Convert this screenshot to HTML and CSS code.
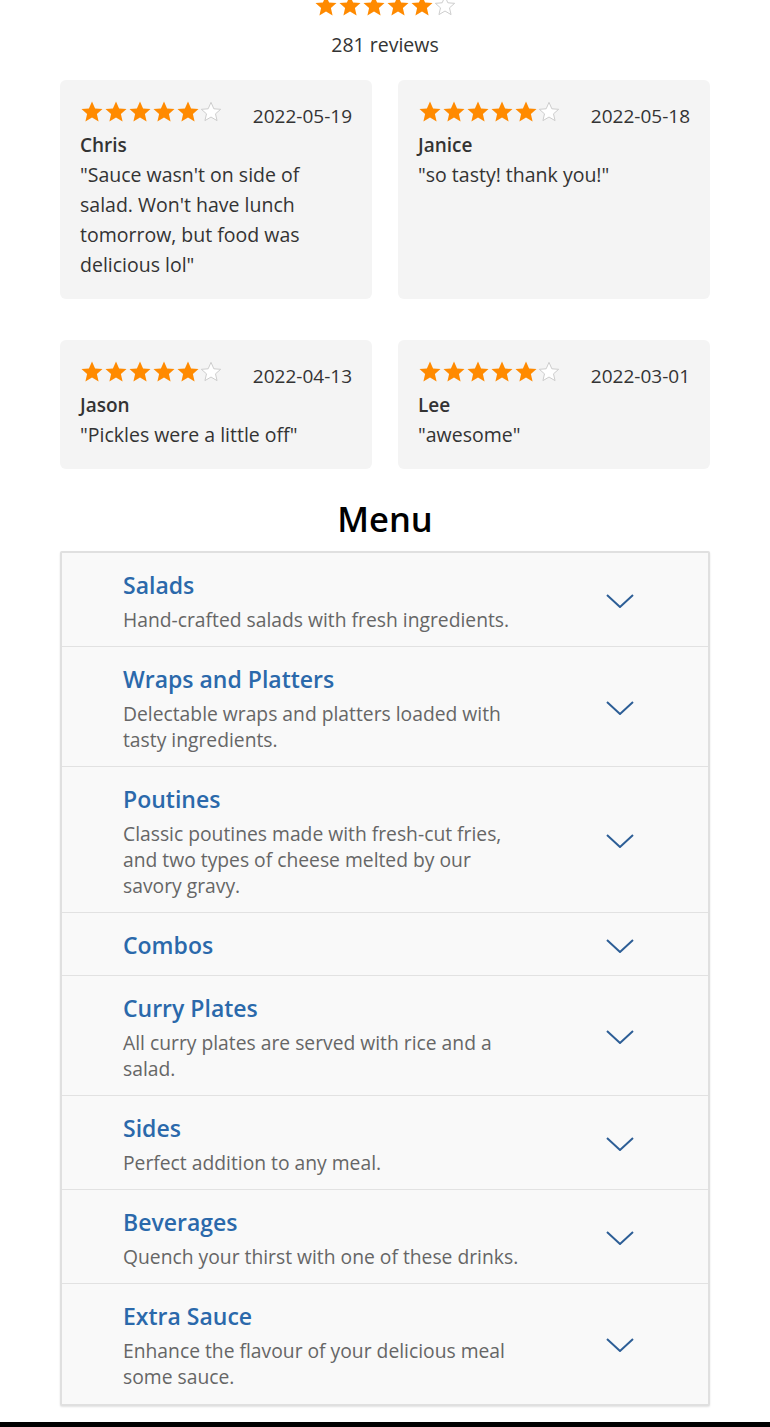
FILE: index.html
```html
<!DOCTYPE html>
<html>
<head>
<meta charset="utf-8">
<link rel="stylesheet" href="styles.css">
</head>
<body>
<svg width="0" height="0" class="defs">
  <defs>
    <symbol id="star" viewBox="0 0 24 24"><path d="M12 1.5l3.1 7 7.4.6-5.6 4.9 1.7 7.4L12 17.5l-6.6 3.9 1.7-7.4L1.5 9.1l7.4-.6z"/></symbol>
  </defs>
</svg>
<div class="page">
  <div class="summary">
    <div class="stars">
      <svg class="star full"><use href="#star"/></svg><svg class="star full"><use href="#star"/></svg><svg class="star full"><use href="#star"/></svg><svg class="star full"><use href="#star"/></svg><svg class="star full"><use href="#star"/></svg><svg class="star empty"><use href="#star"/></svg>
    </div>
    <div class="count">281 reviews</div>
  </div>

  <div class="reviews">
    <div class="card">
      <div class="card-top">
        <div class="stars"><svg class="star full"><use href="#star"/></svg><svg class="star full"><use href="#star"/></svg><svg class="star full"><use href="#star"/></svg><svg class="star full"><use href="#star"/></svg><svg class="star full"><use href="#star"/></svg><svg class="star empty"><use href="#star"/></svg></div>
        <span class="date">2022-05-19</span>
      </div>
      <div class="name">Chris</div>
      <div class="quote">"Sauce wasn't on side of salad. Won't have lunch tomorrow, but food was delicious lol"</div>
    </div>
    <div class="card">
      <div class="card-top">
        <div class="stars"><svg class="star full"><use href="#star"/></svg><svg class="star full"><use href="#star"/></svg><svg class="star full"><use href="#star"/></svg><svg class="star full"><use href="#star"/></svg><svg class="star full"><use href="#star"/></svg><svg class="star empty"><use href="#star"/></svg></div>
        <span class="date">2022-05-18</span>
      </div>
      <div class="name">Janice</div>
      <div class="quote">"so tasty! thank you!"</div>
    </div>
    <div class="card">
      <div class="card-top">
        <div class="stars"><svg class="star full"><use href="#star"/></svg><svg class="star full"><use href="#star"/></svg><svg class="star full"><use href="#star"/></svg><svg class="star full"><use href="#star"/></svg><svg class="star full"><use href="#star"/></svg><svg class="star empty"><use href="#star"/></svg></div>
        <span class="date">2022-04-13</span>
      </div>
      <div class="name">Jason</div>
      <div class="quote">"Pickles were a little off"</div>
    </div>
    <div class="card">
      <div class="card-top">
        <div class="stars"><svg class="star full"><use href="#star"/></svg><svg class="star full"><use href="#star"/></svg><svg class="star full"><use href="#star"/></svg><svg class="star full"><use href="#star"/></svg><svg class="star full"><use href="#star"/></svg><svg class="star empty"><use href="#star"/></svg></div>
        <span class="date">2022-03-01</span>
      </div>
      <div class="name">Lee</div>
      <div class="quote">"awesome"</div>
    </div>
  </div>

  <h2 class="menu-title">Menu</h2>

  <div class="menu">
    <div class="item">
      <div class="text"><div class="title">Salads</div><div class="desc">Hand-crafted salads with fresh ingredients.</div></div>
      <svg class="chev" viewBox="0 0 28 14"><polyline points="1,1 14,13 27,1"/></svg>
    </div>
    <div class="item">
      <div class="text"><div class="title">Wraps and Platters</div><div class="desc">Delectable wraps and platters loaded with tasty ingredients.</div></div>
      <svg class="chev" viewBox="0 0 28 14"><polyline points="1,1 14,13 27,1"/></svg>
    </div>
    <div class="item">
      <div class="text"><div class="title">Poutines</div><div class="desc">Classic poutines made with fresh-cut fries, and two types of cheese melted by our savory gravy.</div></div>
      <svg class="chev" viewBox="0 0 28 14"><polyline points="1,1 14,13 27,1"/></svg>
    </div>
    <div class="item">
      <div class="text"><div class="title">Combos</div></div>
      <svg class="chev" viewBox="0 0 28 14"><polyline points="1,1 14,13 27,1"/></svg>
    </div>
    <div class="item">
      <div class="text"><div class="title">Curry Plates</div><div class="desc">All curry plates are served with rice and a salad.</div></div>
      <svg class="chev" viewBox="0 0 28 14"><polyline points="1,1 14,13 27,1"/></svg>
    </div>
    <div class="item">
      <div class="text"><div class="title">Sides</div><div class="desc">Perfect addition to any meal.</div></div>
      <svg class="chev" viewBox="0 0 28 14"><polyline points="1,1 14,13 27,1"/></svg>
    </div>
    <div class="item">
      <div class="text"><div class="title">Beverages</div><div class="desc">Quench your thirst with one of these drinks.</div></div>
      <svg class="chev" viewBox="0 0 28 14"><polyline points="1,1 14,13 27,1"/></svg>
    </div>
    <div class="item">
      <div class="text"><div class="title">Extra Sauce</div><div class="desc">Enhance the flavour of your delicious meal some sauce.</div></div>
      <svg class="chev" viewBox="0 0 28 14"><polyline points="1,1 14,13 27,1"/></svg>
    </div>
  </div>
</div>
<footer class="footer"></footer>
</body>
</html>
```

FILE: styles.css
```css
html, body {
  margin: 0;
  padding: 0;
  background: #fff;
}
body {
  font-family: "Open Sans", "Noto Sans", sans-serif;
  color: #333;
  overflow: hidden;
}
.defs {
  position: absolute;
  width: 0;
  height: 0;
}
.page {
  width: 650px;
  margin: 0 auto;
}
.summary {
  display: flex;
  flex-direction: column;
  align-items: center;
  margin-top: -6px;
}
.stars {
  display: flex;
  height: 24px;
}
.star {
  width: 24px;
  height: 24px;
  flex: none;
}
.star.full {
  fill: #ff8a00;
}
.star.empty {
  fill: #fff;
  stroke: #c8c8c8;
  stroke-width: 1;
  width: 22px;
}
.count {
  margin-top: 12px;
  font-size: 19.5px;
  line-height: 30px;
  color: #333;
}
.reviews {
  margin-top: 20px;
  display: grid;
  grid-template-columns: 1fr 1fr;
  column-gap: 26px;
  row-gap: 41px;
}
.card {
  background: #f4f4f4;
  border-radius: 6px;
  padding: 20px 20px 19px;
  font-size: 19.5px;
  line-height: 30px;
  color: #333;
}
.card-top {
  display: flex;
  justify-content: space-between;
  align-items: center;
  height: 30px;
}
.card-top .stars {
  margin-top: -6px;
}
.date {
  font-size: 19px;
  padding-top: 2px;
}
.name {
  font-weight: 600;
  font-size: 19px;
}
.quote {
  font-size: 19.5px;
}
.menu-title {
  margin: 30px 0 12px;
  text-align: center;
  font-size: 34.5px;
  line-height: 40px;
  font-weight: 600;
  color: #000;
}
.menu {
  border: 2px solid #e0e0e0;
  border-radius: 2px;
  background: #f9f9f9;
  box-shadow: 0 1px 2px rgba(0, 0, 0, 0.12);
}
.item {
  display: flex;
  align-items: center;
  padding: 17px 74px 14px 61px;
  border-bottom: 1px solid #e2e2e2;
}
.item:last-child {
  border-bottom: none;
  padding-bottom: 15px;
}
.text {
  flex: 0 0 405px;
}
.title {
  font-size: 23px;
  line-height: 31px;
  font-weight: 600;
  color: #2b69ab;
}
.desc {
  margin-top: 5px;
  margin-bottom: -1px;
  padding-top: 1px;
  font-size: 19.3px;
  line-height: 26px;
  color: #666;
}
.chev {
  margin-left: auto;
  width: 28px;
  height: 14px;
  fill: none;
  stroke: #2d5e96;
  stroke-width: 2;
}
.footer {
  margin-top: 16px;
  height: 60px;
  background: #000;
}
```
